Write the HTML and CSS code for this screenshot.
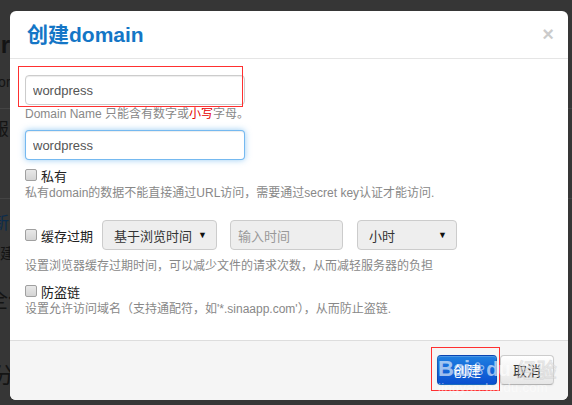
FILE: index.html
```html
<!DOCTYPE html>
<html>
<head>
<meta charset="utf-8">
<link rel="stylesheet" href="styles.css">
</head>
<body>
<div class="page">
  <div class="p-title">Gra</div>
  <div class="p-line">Dor</div>
  <div class="p-rule"></div>
  <div class="p-big">l服</div>
  <div class="p-rule2"></div>
  <div class="p-link">新</div>
  <div class="p-small">创建</div>
  <div class="p-h">全仁</div>
  <div class="p-h2">分</div>
</div>

<div class="modal">
  <div class="modal-header">
    <h3 class="title">创建domain</h3>
    <span class="close">×</span>
  </div>
  <div class="modal-body">
    <div class="field"><input class="text" type="text" value="wordpress"></div>
    <div class="help">Domain Name 只能含有数字或<span class="red">小写</span>字母。</div>
    <div class="field gap6"><input class="text focus" type="text" value="wordpress"></div>
    <label class="check gap6"><span class="box"></span>私有</label>
    <div class="help">私有domain的数据不能直接通过URL访问，需要通过secret key认证才能访问.</div>
    <div class="row">
      <label class="check"><span class="box"></span>缓存过期</label>
      <div class="select sel1"><span>基于浏览时间</span><span class="arrow">▼</span></div>
      <div class="dis">输入时间</div>
      <div class="select sel2"><span>小时</span><span class="arrow">▼</span></div>
    </div>
    <div class="help gap7">设置浏览器缓存过期时间，可以减少文件的请求次数，从而减轻服务器的负担</div>
    <label class="check gap6"><span class="box"></span>防盗链</label>
    <div class="help">设置允许访问域名（支持通配符，如'*.sinaapp.com'），从而防止盗链.</div>
  </div>
  <div class="modal-footer">
    <button class="btn primary">创建</button>
    <button class="btn">取消</button>
  </div>
</div>

<div class="mark mark1"></div>
<div class="mark mark2"></div>
<div class="watermark">
  <div class="wm-top"><span class="wm-bai">Bai</span><span class="wm-paw">❀</span><span class="wm-du">du</span><span class="wm-jy">经验</span></div>
  <div class="wm-url">jingyan.baidu.com</div>
</div>
</body>
</html>
```

FILE: styles.css
```css
html, body {
  margin: 0;
  padding: 0;
}
body {
  width: 572px;
  height: 405px;
  overflow: hidden;
  position: relative;
  background: #363636;
  font-family: "Liberation Sans", "Noto Sans CJK SC", sans-serif;
  font-size: 13px;
  color: #333;
}
.page {
  padding-top: 30px;
  margin-left: -12px;
  color: #141414;
  font-family: "Liberation Sans", "Noto Sans CJK SC", sans-serif;
}
.p-title { font-size: 24px; font-weight: bold; line-height: 30px; margin-left: -6px; }
.p-line { font-size: 14px; margin-top: 14px; }
.p-rule { border-top: 1px solid #444; margin-top: 18px; }
.p-big { font-size: 17px; margin-top: 6px; }
.p-rule2 { border-top: 1px solid #444; margin-top: 58px; }
.p-link { font-size: 17px; color: #0c2c4c; margin-top: 10px; margin-left: 4px; }
.p-small { font-size: 15px; margin-top: 8px; margin-left: -3px; }
.p-h { font-size: 22px; margin-top: 18px; margin-left: -2px; }
.p-h2 { font-size: 22px; margin-top: 44px; margin-left: 4px; }

.modal {
  position: absolute;
  left: 10px;
  top: 11px;
  width: 558px;
  height: 389px;
  background: #fff;
  border-radius: 6px;
  display: flex;
  flex-direction: column;
  overflow: hidden;
}
.modal-header {
  height: 47px;
  border-bottom: 1px solid #e5e5e5;
  display: flex;
  align-items: center;
  justify-content: space-between;
  padding: 0 14px 0 17px;
  flex: none;
}
.title {
  margin: 0;
  font-size: 21px;
  font-weight: bold;
  color: #1476c6;
  line-height: 24px;
  font-family: "Liberation Sans", "Noto Sans CJK SC", sans-serif;
}
.close {
  font-size: 20px;
  font-weight: bold;
  color: #000;
  opacity: 0.2;
  line-height: 20px;
  margin-top: -2px;
}
.modal-body {
  flex: 1;
  padding: 16px 15px 0 15px;
  display: flex;
  flex-direction: column;
  align-items: flex-start;
}
.field { height: 30px; }
.text {
  box-sizing: border-box;
  width: 220px;
  height: 30px;
  border: 1px solid #ccc;
  border-radius: 4px;
  padding: 0 7px;
  font-family: "Liberation Sans", "Noto Sans CJK SC", sans-serif;
  font-size: 13px;
  color: #555;
  background: #fff;
  box-shadow: inset 0 1px 1px rgba(0,0,0,0.075);
  outline: none;
  margin: 0;
}
.text.focus {
  border-color: rgba(82, 168, 236, 0.8);
  box-shadow: inset 0 1px 1px rgba(0,0,0,0.075), 0 0 6px rgba(82,168,236,0.6);
}
.gap6 { margin-top: 6px; }
.gap7 { margin-top: 7px; }
.help {
  font-size: 12px;
  line-height: 19px;
  color: #888;
}
.red { color: #e50000; }
.check {
  display: flex;
  align-items: center;
  height: 18px;
  font-size: 13px;
  color: #222;
}
.box {
  box-sizing: border-box;
  width: 12px;
  height: 12px;
  border: 1px solid #a0a0a0;
  border-radius: 2px;
  background: linear-gradient(#e8e8e8, #d4d4d4);
  margin-right: 4px;
}
.row {
  display: flex;
  align-items: center;
  margin-top: 17px;
  height: 30px;
}
.select {
  box-sizing: border-box;
  height: 30px;
  border: 1px solid #ccc;
  border-radius: 4px;
  background: #eee;
  display: flex;
  align-items: center;
  justify-content: space-between;
  padding: 0 9px 0 11px;
  font-size: 13px;
  color: #333;
}
.sel1 { width: 115px; margin-left: 9px; }
.sel2 { width: 100px; margin-left: 14px; }
.arrow { font-size: 9px; color: #111; }
.dis {
  box-sizing: border-box;
  width: 113px;
  height: 30px;
  margin-left: 13px;
  border: 1px solid #ccc;
  border-radius: 4px;
  background: #eee;
  color: #999;
  display: flex;
  align-items: center;
  padding: 0 7px;
  font-size: 13px;
}
.modal-footer {
  flex: none;
  height: 60px;
  border-top: 1px solid #ddd;
  background: #f5f5f5;
  display: flex;
  justify-content: flex-end;
  align-items: flex-start;
  padding: 14px 14px 0 0;
  box-sizing: border-box;
  gap: 3px;
}
.btn {
  height: 30px;
  border: 1px solid #ccc;
  border-bottom-color: #b3b3b3;
  border-radius: 4px;
  background: linear-gradient(#fff, #e6e6e6);
  font-family: "Liberation Sans", "Noto Sans CJK SC", sans-serif;
  font-size: 14px;
  color: #333;
  padding: 0 12px;
  width: 54px;
  margin: 0;
  box-shadow: inset 0 1px 0 rgba(255,255,255,0.2), 0 1px 2px rgba(0,0,0,0.05);
}
.btn.primary {
  width: 60px;
  color: #fff;
  background: linear-gradient(#1f7fe0, #0a4fd0);
  border-color: rgba(0,0,0,0.15);
}
.mark {
  position: absolute;
  border: 1px solid #ff3030;
  box-sizing: border-box;
}
.mark1 { left: 18px; top: 66px; width: 225px; height: 41px; }
.mark2 { left: 431px; top: 347px; width: 69px; height: 44px; }
.watermark {
  position: absolute;
  left: 438px;
  top: 357px;
  color: rgba(255,255,255,0.6);
  font-family: "Liberation Sans", sans-serif;
}
.wm-top { display: flex; align-items: center; height: 24px; }
.wm-bai { font-size: 22px; font-weight: bold; letter-spacing: -1px; }
.wm-paw { font-size: 18px; margin: 0 1px; }
.wm-du { font-size: 20px; font-weight: bold; }
.wm-jy {
  font-size: 20px;
  margin-left: 6px;
  font-family: "Noto Sans CJK SC", sans-serif;
  color: rgba(255,255,255,0.4);
  -webkit-text-stroke: 1px rgba(200,200,200,0.5);
}
.wm-url { font-size: 13px; margin-top: -1px; color: rgba(255,255,255,0.5); letter-spacing: 0.3px; }
```
